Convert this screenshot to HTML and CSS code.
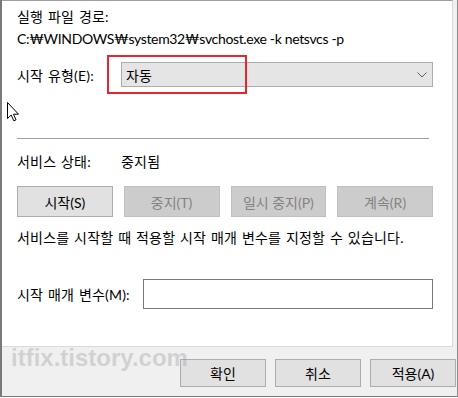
FILE: index.html
```html
<!DOCTYPE html>
<html lang="ko">
<head>
    <meta charset="UTF-8">
    <meta name="viewport" content="width=device-width, initial-scale=1.0">
    <title>서비스 속성</title>
    <link rel="stylesheet" href="styles.css">
</head>
<body>

    <div class="window">
        <!-- General tab panel -->
        <div class="panel">
            <p class="line">실행 파일 경로:</p>
            <p class="line path">C:₩WINDOWS₩system32₩svchost.exe -k netsvcs -p</p>

            <div class="row start-type">
                <span class="label">시작 유형(E):</span>
                <div class="combo">
                    <span>자동</span>
                    <svg class="chevron" width="10" height="6" viewBox="0 0 10 6">
                        <path d="M0.5 0.5 L5 5 L9.5 0.5" fill="none" stroke="#606060" stroke-width="1"/>
                    </svg>
                </div>
                <div class="highlight"></div>
            </div>

            <svg class="cursor" width="13" height="20" viewBox="0 0 13 20">
                <path d="M0.5 0.5 L0.5 16.5 L4.2 13 L6.8 18.8 L9 17.8 L6.5 12.2 L11.5 12.2 Z" fill="#fff" stroke="#000" stroke-width="1"/>
            </svg>

            <hr class="sep">

            <div class="row status">
                <span class="label">서비스 상태:</span>
                <span>중지됨</span>
            </div>

            <div class="actions">
                <button class="btn">시작(S)</button>
                <button class="btn" disabled>중지(T)</button>
                <button class="btn" disabled>일시 중지(P)</button>
                <button class="btn" disabled>계속(R)</button>
            </div>

            <p class="line desc">서비스를 시작할 때 적용할 시작 매개 변수를 지정할 수 있습니다.</p>

            <div class="row params">
                <span class="label wide">시작 매개 변수(M):</span>
                <input type="text" class="param-input">
            </div>
        </div>

        <!-- Dialog buttons -->
        <div class="footer">
            <button class="btn dlg">확인</button>
            <button class="btn dlg">취소</button>
            <button class="btn dlg">적용(A)</button>
        </div>

        <div class="watermark">itfix.tistory.com</div>
    </div>

</body>
</html>
```

FILE: styles.css
```css
/* General Styles */
body {
    margin: 0;
    background: #ffffff;
    font-family: Lato, "Noto Sans CJK KR", sans-serif;
    font-size: 14px;
    color: #000;
}

.window {
    position: relative;
    width: 455px;
    height: 396px;
    background: #f0f0f0;
    border-left: 2px solid #7a7a7a;
    border-right: 1px solid #8c8c8c;
    border-bottom: 1px solid #7a7a7a;
    display: flex;
    flex-direction: column;
}

.panel {
    position: relative;
    margin-right: 4px;
    background: #fff;
    border-top: 1px solid #a0a0a0;
    border-right: 1px solid #dadada;
    border-bottom: 1px solid #dadada;
    padding: 6px 19px 0 15px;
    box-sizing: border-box;
    height: 347px;
    letter-spacing: 0.2px;
    word-spacing: 1px;
}

.line {
    margin: 0;
    line-height: 20px;
    white-space: nowrap;
}

.line + .line {
    margin-top: 2px;
}

.line.path {
    letter-spacing: -0.35px;
    word-spacing: 0;
}

.row {
    position: relative;
    display: flex;
    align-items: center;
}

.label {
    width: 104px;
    flex: none;
}

.label.wide {
    width: 126px;
}

.start-type {
    margin-top: 13px;
}

.combo {
    flex: 1;
    height: 25px;
    box-sizing: border-box;
    background: #e5e5e5;
    border: 1px solid #adadad;
    display: flex;
    align-items: center;
    justify-content: space-between;
    padding: 0 5px 0 4px;
}

.chevron {
    display: block;
}

.highlight {
    position: absolute;
    left: 90px;
    top: -7px;
    width: 140px;
    height: 39px;
    box-sizing: border-box;
    border: 2px solid #e8242c;
}

.cursor {
    position: absolute;
    left: 5px;
    top: 101px;
}

.sep {
    margin: 51px 4px 0 0;
    border: none;
    border-top: 1px solid #a0a0a0;
    height: 0;
}

.status {
    margin-top: 13px;
    line-height: 20px;
}

.actions {
    margin-top: 14px;
    display: grid;
    grid-template-columns: repeat(4, 1fr);
    gap: 11px;
}

.btn {
    font: inherit;
    height: 31px;
    background: #e1e1e1;
    border: 1px solid #adadad;
    color: #000;
    padding: 0;
}

.btn:disabled {
    background: #cccccc;
    border-color: #bfbfbf;
    color: #838383;
}

.desc {
    margin-top: 11px;
}

.params {
    margin-top: 31px;
}

.param-input {
    flex: 1;
    height: 30px;
    box-sizing: border-box;
    border: 1px solid #7a7a7a;
    background: #fff;
    margin: 0;
}

.footer {
    flex: 1;
    display: flex;
    justify-content: flex-end;
    gap: 9px;
    padding: 12px 1px 0 0;
}

.btn.dlg {
    width: 86px;
    height: 28px;
}

.watermark {
    position: absolute;
    left: 9px;
    top: 344px;
    font-family: "Liberation Sans", Arial, sans-serif;
    font-weight: bold;
    font-size: 24px;
    color: rgba(150, 150, 150, 0.35);
}
```
